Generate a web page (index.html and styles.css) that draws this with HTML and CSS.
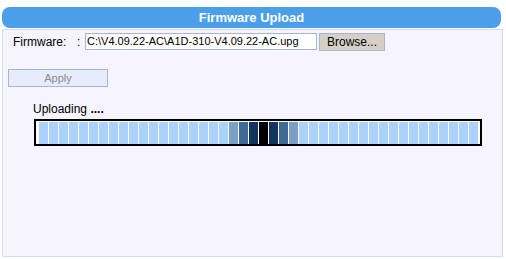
FILE: index.html
```html
<!DOCTYPE html>
<html>
<head>
<meta charset="utf-8">
<link rel="stylesheet" href="styles.css">
</head>
<body>
<div class="header">Firmware Upload</div>
<div class="panel">
  <div class="row">
    <span class="label">Firmware:</span>
    <span class="colon">:</span>
    <span class="file">C:\V4.09.22-AC\A1D-310-V4.09.22-AC.upg</span>
    <span class="browse">Browse...</span>
  </div>
  <div class="apply">Apply</div>
  <div class="uploading">Uploading <b>....</b></div>
  <div class="progress" id="progress"></div>
</div>
<script src="app.js"></script>
</body>
</html>
```
FILE: app.js
```js
var colors = {19:'#7ba0c8',20:'#3f6a96',21:'#13345e',22:'#000000',23:'#13345e',24:'#3f6a96',25:'#7ba0c8'};
var p = document.getElementById('progress');
for (var i = 0; i < 44; i++) {
  var c = document.createElement('div');
  c.className = 'cell';
  if (colors[i]) c.style.background = colors[i];
  p.appendChild(c);
}
```
FILE: styles.css
```css
html, body { margin: 0; padding: 0; background: #ffffff; }
body { font-family: "Liberation Sans", Arial, sans-serif; font-size: 12px; color: #000; }
.header {
  margin: 7px 5px 0 2px;
  height: 21px;
  line-height: 21px;
  background: #4b9fe8;
  border-radius: 8px;
  color: #fff;
  font-weight: bold;
  font-size: 13px;
  text-align: center;
}
.panel {
  margin: 1px 3px 0 2px;
  height: 226px;
  border: 1px solid #d2dcf8;
  background: #f6f4fe;
}
.row {
  display: flex;
  align-items: center;
  padding: 3px 0 0 10px;
  height: 17px;
}
.label { width: 64px; }
.colon { width: 8px; }
.file {
  box-sizing: border-box;
  width: 232px;
  height: 17px;
  line-height: 15px;
  border: 1px solid #a8b4d4;
  background: #fff;
  padding-left: 1px;
  font-size: 11px;
  white-space: nowrap;
  overflow: hidden;
}
.browse {
  box-sizing: border-box;
  margin-left: 2px;
  width: 66px;
  height: 18px;
  line-height: 16px;
  border: 1px solid #a8b4d4;
  background: #d4d0c8;
  text-align: center;
}
.apply {
  box-sizing: border-box;
  margin: 19px 0 0 5px;
  width: 100px;
  height: 18px;
  line-height: 16px;
  border: 1px solid #a8b4d8;
  background: #e6ecfc;
  color: #8a8a8a;
  text-align: center;
  font-size: 11px;
}
.uploading { margin: 14px 0 0 30px; height: 16px; line-height: 16px; }
.uploading b { font-weight: bold; }
.progress {
  box-sizing: border-box;
  margin: 2px 0 0 31px;
  width: 448px;
  height: 27px;
  border: 2px solid #000;
  background: #fff;
  display: flex;
  gap: 1px;
  padding: 1px 2px 0 3px;
}
.cell { width: 9px; height: 22px; background: #abd1fd; }
```
